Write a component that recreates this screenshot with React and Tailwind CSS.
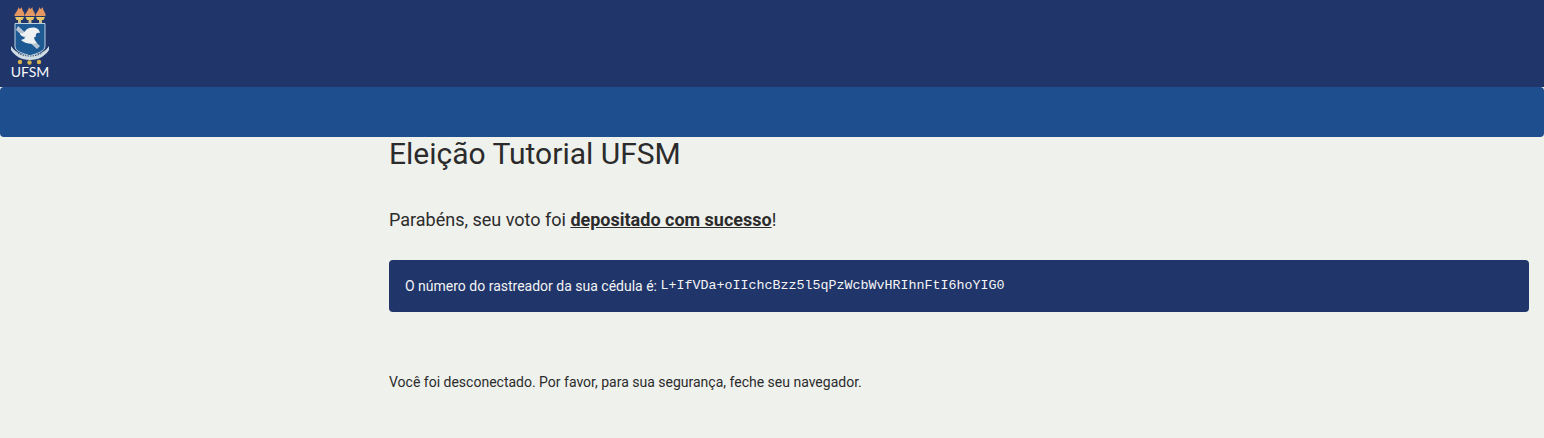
const UfsmLogo = () => (
  <div className="flex w-[38px] flex-col items-center">
    <svg width="38" height="60" viewBox="0 0 38 60">
      {/* torches */}
      {[8.5, 19, 29.5].map((x) => (
        <g key={x}>
          <path
            d={`M${x - 5} 11 C${x - 5} 8 ${x - 2} 7 ${x - 1} 2 C${x} 5 ${x + 1} 4 ${x + 2.5} 2 C${x + 2} 6 ${x + 5.5} 7 ${x + 5} 11 Z`}
            fill="#e59763"
          />
          <path d={`M${x - 4.5} 12 H${x + 4.5} L${x + 3} 15 H${x - 3} Z`} fill="#e9c766" />
          <rect x={x - 1.5} y="15" width="3" height="4" fill="#cdbf8c" />
        </g>
      ))}
      {/* shield */}
      <path d="M4 18.5 H34 V41 C34 47 26 48 19 51 C12 48 4 47 4 41 Z" fill="#1d5a94" stroke="#bcd0de" strokeWidth="1" />
      {/* book and hand */}
      <path d="M7 21 L29 41 L26 44 L5 25 Z" fill="#b9c6d2" />
      <path
        d="M15 25 C20 21 28 22 29 28 C26 27 24 29 25 32 C22 31 23 35 26 38 C20 40 13 38 10 35 C13 34 15 33 15 31 C12 32 9 31 9 28 C11 29 13 28 15 25 Z"
        fill="#eef1f2"
      />
      {/* ribbon */}
      <path
        d="M0 41 C3 46 9 50 19 50 C29 50 35 46 38 41 L38 45 C34 51 28 55 19 55 C10 55 4 51 0 45 Z"
        fill="#cfdde3"
      />
      <path d="M7 48 C13 52 25 52 31 48" fill="none" stroke="#33527a" strokeWidth="1" strokeDasharray="1.5 1" />
      {/* stars */}
      <circle cx="9" cy="57" r="2.2" fill="#d9b24c" />
      <circle cx="18.5" cy="57.5" r="2.2" fill="#d9b24c" />
      <circle cx="28" cy="57" r="2.2" fill="#d9b24c" />
    </svg>
    <span className="font-['Lato',sans-serif] text-[14px] font-normal leading-[13px] text-[#f7f8f8]">
      UFSM
    </span>
  </div>
);

const App = () => {
  return (
    <div className="flex min-h-[438px] flex-col bg-[#eff1ed] font-['Roboto',sans-serif] text-[#2b2b2b]">
      <header className="h-[87px] bg-[#20366b] pl-[11px] pt-[5px]">
        <UfsmLogo />
      </header>
      <nav className="h-[50px] rounded-[4px] bg-[#1f4e8f]" />

      <main className="pl-[389px] pr-[15px]">
        <h1 className="text-[30px] font-normal leading-[33px]">Eleição Tutorial UFSM</h1>

        <p className="mt-[36px] text-[18px] leading-[27px]">
          Parabéns, seu voto foi{" "}
          <span className="font-bold underline">depositado com sucesso</span>!
        </p>

        <div className="mt-[27px] flex h-[52px] items-center rounded-[4px] bg-[#20366b] px-[16px] text-[14px] text-[#f4f4f4]">
          <span className="whitespace-pre">O número do rastreador da sua cédula é: </span>
          <code className="font-['Liberation_Mono',monospace] text-[13.33px]">
            L+IfVDa+oIIchcBzz5l5qPzWcbWvHRIhnFtI6hoYIG0
          </code>
        </div>

        <p className="mt-[60px] text-[14px] leading-[21px]">
          Você foi desconectado. Por favor, para sua segurança, feche seu navegador.
        </p>
      </main>
    </div>
  );
};

export default App;
